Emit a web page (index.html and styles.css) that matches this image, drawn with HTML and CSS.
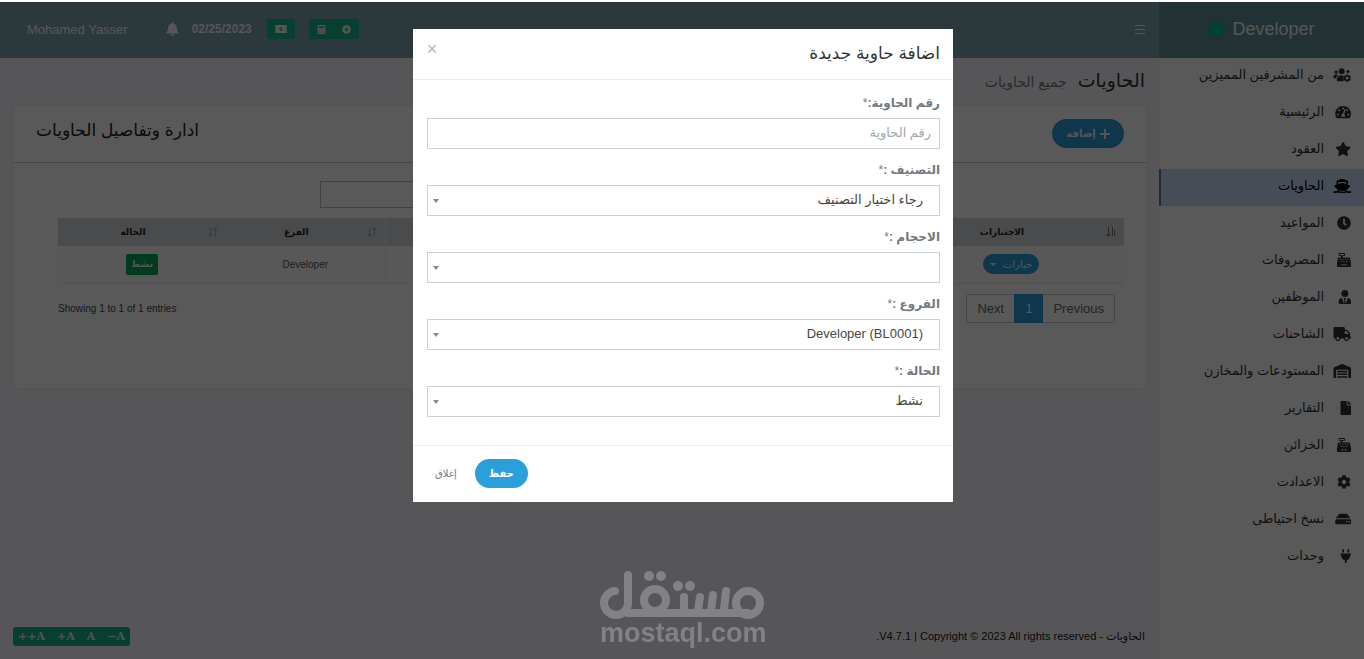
FILE: index.html
```html
<!DOCTYPE html>
<html lang="ar" dir="rtl">
<head>
<meta charset="utf-8">
<meta name="viewport" content="width=device-width, initial-scale=1">
<title>الحاويات</title>
<link rel="stylesheet" href="styles.css">
</head>
<body>
<div class="app">
  <aside class="sidebar">
    <a class="brand" href="#"><span class="brand-name" dir="ltr">Developer</span><span class="brand-dot"></span></a>
    <nav>
      <ul class="menu">
        <li><a href="#"><svg class="icon" preserveAspectRatio="xMaxYMid" viewBox="0 0 640 512"><circle cx="96" cy="150" r="62"/><circle cx="300" cy="120" r="108"/><circle cx="530" cy="130" r="56"/><path d="M0 330c0-60 30-96 80-96h50c20 0 36 8 48 20-50 28-76 70-84 120H0zM120 440c0-100 50-170 140-170h80c20 0 30 10 30 40v170H160c-25 0-40-15-40-40z"/><path fill-rule="evenodd" d="M466 230h64l8 40 30 17 38-13 32 54-30 27v34l30 27-32 54-38-13-30 17-8 38h-64l-8-38-30-17-38 13-32-54 30-27v-34l-30-27 32-54 38 13 30-17zM498 322a50 50 0 1 0 0 100 50 50 0 0 0 0-100z"/></svg><span>من المشرفين المميزين</span></a></li>
        <li><a href="#"><svg class="icon" preserveAspectRatio="xMaxYMid" viewBox="0 0 576 512"><path fill-rule="evenodd" d="M288 32C129 32 0 161 0 320c0 53 14 102 39 145 6 9 16 15 27 15h444c11 0 21-6 27-15 25-43 39-92 39-145C576 161 447 32 288 32zm0 62a34 34 0 1 1 0 68 34 34 0 0 1 0-68zM96 384a34 34 0 1 1 0-68 34 34 0 0 1 0 68zm48-160a34 34 0 1 1 0-68 34 34 0 0 1 0 68zm208 208H224c-10-50 10-95 57-110l61-184 40 13-61 185c36 20 50 56 31 96zm128-48a34 34 0 1 1 0-68 34 34 0 0 1 0 68zm-48-160a34 34 0 1 1 0-68 34 34 0 0 1 0 68z"/></svg><span>الرئيسية</span></a></li>
        <li><a href="#"><svg class="icon" preserveAspectRatio="xMaxYMid" viewBox="0 0 576 512"><path d="M259.3 17.8L194 150.2 47.9 171.5c-26.2 3.8-36.7 36.1-17.7 54.6l105.7 103-25 145.5c-4.5 26.3 23.2 46 46.4 33.7L288 439.6l130.7 68.7c23.2 12.2 50.9-7.4 46.4-33.7l-25-145.5 105.7-103c19-18.5 8.5-50.8-17.7-54.6L382 150.2 316.7 17.8c-11.7-23.6-45.6-23.9-57.4 0z"/></svg><span>العقود</span></a></li>
        <li class="active"><a href="#"><svg class="icon" preserveAspectRatio="xMaxYMid" viewBox="0 0 640 512"><path fill-rule="evenodd" d="M224 0h192v48h64c26 0 48 22 48 48v110l60 20c22 8 28 34 12 50l-92 96c-20 36-60 60-108 60H240c-48 0-88-24-108-60L40 276c-16-16-10-42 12-50l60-20V96c0-26 22-48 48-48h64zm-48 112v72l144-46 144 46v-72z"/><path d="M0 448h90c30 0 50-20 66-38 40 50 100 50 164 50s124 0 164-50c16 18 36 38 66 38h90v64h-90c-30 0-50-8-66-18-50 22-110 18-164 18s-114 4-164-18c-16 10-36 18-66 18H0z"/></svg><span>الحاويات</span></a></li>
        <li><a href="#"><svg class="icon" preserveAspectRatio="xMaxYMid" viewBox="0 0 512 512"><path d="M256 8C119 8 8 119 8 256s111 248 248 248 248-111 248-248S393 8 256 8zm92 313l-20 25a16 16 0 0 1-22 2l-67-49a40 40 0 0 1-15-31V112a16 16 0 0 1 16-16h32a16 16 0 0 1 16 16v144l58 42a16 16 0 0 1 2 23z"/></svg><span>المواعيد</span></a></li>
        <li><a href="#"><svg class="icon" preserveAspectRatio="xMaxYMid" viewBox="0 0 512 512"><path fill-rule="evenodd" d="M64 0h224v112h-80v48h240c16 0 28 12 32 28l32 196v96c0 18-14 32-32 32H32c-18 0-32-14-32-32v-96l32-196c4-16 16-28 32-28h80v-48H64zm32 32v48h160V32zM96 208v40h40v-40zm96 0v40h40v-40zm96 0v40h40v-40zm96 0v40h40v-40zM140 290v40h40v-40zm92 0v40h40v-40zm96 0v40h40v-40zM144 416v32h224v-32z"/></svg><span>المصروفات</span></a></li>
        <li><a href="#"><svg class="icon" preserveAspectRatio="xMaxYMid" viewBox="0 0 448 512"><circle cx="224" cy="128" r="128"/><path d="M120 290l70 210 22-120-30-60 20-30h44l20 30-30 60 22 120 70-210c70 6 120 56 120 130v44c0 26-22 48-48 48H48c-26 0-48-22-48-48v-44c0-74 50-124 120-130z"/></svg><span>الموظفين</span></a></li>
        <li><a href="#"><svg class="icon" preserveAspectRatio="xMaxYMid" viewBox="0 0 640 512"><path d="M624 352h-16V243.900c0-12.700-5.100-24.900-14.100-33.900L494 110.100c-9-9-21.200-14.100-33.900-14.100H416V48c0-26.500-21.500-48-48-48H48C21.500 0 0 21.500 0 48v320c0 26.500 21.500 48 48 48h16c0 53 43 96 96 96s96-43 96-96h128c0 53 43 96 96 96s96-43 96-96h48c8.800 0 16-7.200 16-16v-32c0-8.800-7.200-16-16-16zM160 464c-26.500 0-48-21.500-48-48s21.500-48 48-48 48 21.500 48 48-21.500 48-48 48zm320 0c-26.500 0-48-21.500-48-48s21.500-48 48-48 48 21.500 48 48-21.500 48-48 48zm80-208H416V144h44.100l99.900 99.900V256z"/></svg><span>الشاحنات</span></a></li>
        <li><a href="#"><svg class="icon" preserveAspectRatio="xMaxYMid" viewBox="0 0 640 512"><path d="M610 117L338 4c-12-5-25-5-37 0L30 117C12 125 0 142 0 162v334c0 9 7 16 16 16h80V240c0-18 15-32 33-32h382c18 0 33 14 33 32v272h80c9 0 16-7 16-16V162c0-20-12-37-30-45z"/><path d="M136 248h368v60H136zM136 346h368v60H136zM136 444h368v60H136z"/></svg><span>المستودعات والمخازن</span></a></li>
        <li><a href="#"><svg class="icon" preserveAspectRatio="xMaxYMid" viewBox="0 0 384 512"><path d="M224 136V0H24C11 0 0 11 0 24v464c0 13 11 24 24 24h336c13 0 24-11 24-24V160H248c-13 0-24-11-24-24zm160-14v6H256V0h6c6 0 12 3 17 7l98 98c4 5 7 11 7 17z"/></svg><span>التقارير</span></a></li>
        <li><a href="#"><svg class="icon" preserveAspectRatio="xMaxYMid" viewBox="0 0 512 512"><path fill-rule="evenodd" d="M64 0h224v112h-80v48h240c16 0 28 12 32 28l32 196v96c0 18-14 32-32 32H32c-18 0-32-14-32-32v-96l32-196c4-16 16-28 32-28h80v-48H64zm32 32v48h160V32zM96 208v40h40v-40zm96 0v40h40v-40zm96 0v40h40v-40zm96 0v40h40v-40zM140 290v40h40v-40zm92 0v40h40v-40zm96 0v40h40v-40zM144 416v32h224v-32z"/></svg><span>الخزائن</span></a></li>
        <li><a href="#"><svg class="icon" preserveAspectRatio="xMaxYMid" viewBox="0 0 512 512"><path d="M487.400 315.700l-42.600-24.600c4.300-23.200 4.300-47 0-70.200l42.600-24.600c4.900-2.800 7.100-8.600 5.500-14-11.100-35.600-30-67.800-54.700-94.600-3.800-4.100-10-5.100-14.800-2.300L380.800 110c-17.900-15.400-38.500-27.300-60.800-35.100V25.800c0-5.600-3.900-10.500-9.400-11.700-36.700-8.200-74.300-7.800-109.200 0-5.500 1.200-9.400 6.100-9.400 11.700V75c-22.200 7.900-42.800 19.800-60.800 35.100L88.700 85.500c-4.900-2.800-11-1.900-14.800 2.300-24.700 26.700-43.600 58.900-54.700 94.600-1.700 5.400.6 11.200 5.500 14L67.300 221c-4.300 23.200-4.300 47 0 70.200l-42.600 24.600c-4.900 2.800-7.100 8.600-5.500 14 11.100 35.600 30 67.800 54.700 94.600 3.800 4.100 10 5.100 14.800 2.300l42.600-24.600c17.900 15.400 38.500 27.300 60.800 35.100v49.200c0 5.600 3.900 10.500 9.400 11.700 36.700 8.200 74.300 7.800 109.200 0 5.500-1.200 9.400-6.100 9.400-11.700v-49.200c22.200-7.900 42.800-19.800 60.800-35.100l42.600 24.600c4.900 2.800 11 1.900 14.800-2.300 24.700-26.700 43.600-58.900 54.700-94.600 1.500-5.500-.7-11.300-5.600-14.100zM256 336c-44.100 0-80-35.900-80-80s35.900-80 80-80 80 35.900 80 80-35.900 80-80 80z"/></svg><span>الاعدادت</span></a></li>
        <li><a href="#"><svg class="icon" preserveAspectRatio="xMaxYMid" viewBox="0 0 576 512"><path fill-rule="evenodd" d="M48 264h480c26 0 48 22 48 48v88c0 26-22 48-48 48H48c-26 0-48-22-48-48v-88c0-26 22-48 48-48zm352 64v56h44v-56zm88 0v56h44v-56z"/><path d="M24 230L130 86c10-14 24-22 40-22h236c16 0 30 8 40 22l106 144z"/></svg><span>نسخ احتياطى</span></a></li>
        <li><a href="#"><svg class="icon" preserveAspectRatio="xMaxYMid" viewBox="0 0 384 512"><path d="M64 32a32 32 0 0 1 64 0v96H64zM256 32a32 32 0 0 1 64 0v96h-64zM16 160h352c9 0 16 7 16 16v32c0 9-7 16-16 16h-16v32c0 77-55 142-128 157v99h-64v-99C87 398 32 333 32 256v-32H16c-9 0-16-7-16-16v-32c0-9 7-16 16-16z"/></svg><span>وحدات</span></a></li>
      </ul>
    </nav>
  </aside>

  <div class="main">
    <header class="topbar">
      <button class="burger" type="button" aria-label="القائمة"><span></span><span></span><span></span></button>
      <div class="topbar-tools" dir="ltr">
        <a class="user" href="#">Mohamed Yasser</a>
        <svg class="bell" viewBox="0 0 448 512"><path d="M224 512c35 0 64-29 64-64H160c0 35 29 64 64 64zm215-150c-19-20-55-52-55-154 0-78-54-140-128-155V32a32 32 0 0 0-64 0v21C118 68 64 130 64 208c0 102-36 134-55 154-6 7-9 14-9 22 0 16 13 32 32 32h384c19 0 32-16 32-32 0-8-3-15-9-22z"/></svg>
        <strong class="date">02/25/2023</strong>
        <button class="tool" type="button" aria-label="النقدية"><svg viewBox="0 0 640 448"><path fill-rule="evenodd" d="M32 0h576c18 0 32 14 32 32v384c0 18-14 32-32 32H32c-18 0-32-14-32-32V32C0 14 14 0 32 0zm288 110c-50 0-86 50-86 114s36 114 86 114 86-50 86-114-36-114-86-114z"/><path d="M296 160h48v128h-48z"/></svg></button>
        <span class="tool-pair">
          <button class="tool" type="button" aria-label="الآلة الحاسبة"><svg class="calc" viewBox="0 0 448 512"><path fill-rule="evenodd" d="M48 0h352c26 0 48 22 48 48v416c0 26-22 48-48 48H48c-26 0-48-22-48-48V48C0 22 22 0 48 0zm16 64v110h320V64zM70 240v64h64v-64zm122 0v64h64v-64zm122 0v64h64v-64zM70 370v64h64v-64zm122 0v64h64v-64zm122 0v64h64v-64z"/></svg></button>
          <button class="tool" type="button" aria-label="إضافة"><svg class="plus" viewBox="0 0 512 512"><path fill-rule="evenodd" d="M256 8a248 248 0 1 0 0 496 248 248 0 0 0 0-496zm-34 116h68v98h98v68h-98v98h-68v-98h-98v-68h98z"/></svg></button>
        </span>
      </div>
    </header>

    <div class="page-head">
      <h1>الحاويات</h1>
      <small>جميع الحاويات</small>
    </div>

    <section class="card">
      <div class="card-head">
        <button class="btn btn-add" type="button"><svg viewBox="0 0 10 10"><path d="M4 0h2v4h4v2H6v4H4V6H0V4h4z"/></svg>إضافة</button>
        <h2>ادارة وتفاصيل الحاويات</h2>
      </div>
      <div class="card-body">
        <div class="search-row"><input class="search" type="search" aria-label="بحث"></div>
        <table class="grid">
          <colgroup><col class="c-opt"><col><col><col><col class="c-branch"><col class="c-state"></colgroup>
          <thead>
            <tr>
              <th><div class="th sorted"><span>الاختبارات</span><svg viewBox="0 0 10 10"><path d="M2 0h1v7h2L2.500 10 0 7h2zM6 0h1v9H6zM8 3h1v6H8z"/></svg></div></th>
              <th></th><th></th><th class="edge"></th>
              <th><div class="th"><span>الفرع</span><svg viewBox="0 0 10 10"><path d="M2 0h1v7h2L2.500 10 0 7h2zM7.500 0L10 3H8v7H7V3H5z"/></svg></div></th>
              <th><div class="th"><span>الحاله</span><svg viewBox="0 0 10 10"><path d="M2 0h1v7h2L2.500 10 0 7h2zM7.500 0L10 3H8v7H7V3H5z"/></svg></div></th>
            </tr>
          </thead>
          <tbody>
            <tr>
              <td><button class="btn btn-options" type="button">خيارات<i class="caret"></i></button></td>
              <td></td><td></td><td class="edge"></td>
              <td>Developer</td>
              <td><span class="badge">نشط</span></td>
            </tr>
          </tbody>
        </table>
        <div class="table-foot">
          <div class="pager">
            <a href="#">Previous</a><a class="current" href="#">1</a><a href="#">Next</a>
          </div>
          <div class="info" dir="ltr">Showing 1 to 1 of 1 entries</div>
        </div>
      </div>
    </section>

    <footer class="foot">
      <div>الحاويات - <span dir="ltr">V4.7.1 | Copyright © 2023 All rights reserved</span>.</div>
      <div class="sizer" dir="ltr">
        <button type="button">++A</button><button type="button">+A</button><button type="button">A</button><button type="button">−A</button>
      </div>
    </footer>
  </div>
</div>

<div class="overlay">
  <form class="modal" role="dialog" aria-labelledby="dlg-title">
    <div class="modal-head">
      <h3 id="dlg-title">اضافة حاوية جديدة</h3>
      <button class="close" type="button" aria-label="إغلاق">×</button>
    </div>
    <div class="modal-body">
      <div class="field"><label for="num"><b>رقم الحاوية:</b>*</label><div class="control"><input id="num" type="text" placeholder="رقم الحاوية"></div></div>
      <div class="field"><label for="cat"><b>التصنيف :</b>*</label><div class="control pick"><select id="cat"><option>رجاء اختيار التصنيف</option></select></div></div>
      <div class="field"><label for="size"><b>الاحجام :</b>*</label><div class="control pick"><select id="size"><option></option></select></div></div>
      <div class="field"><label for="branch"><b>الفروع :</b>*</label><div class="control pick"><select id="branch"><option>&#x202A;Developer (BL0001)&#x202C;</option></select></div></div>
      <div class="field"><label for="state"><b>الحالة :</b>*</label><div class="control pick"><select id="state"><option>نشط</option></select></div></div>
    </div>
    <div class="modal-foot">
      <button class="btn btn-save" type="submit">حفظ</button>
      <button class="btn-link" type="button">إغلاق</button>
    </div>
  </form>
</div>

<div class="watermark" dir="ltr">
  <svg viewBox="0 0 164 50" role="img" aria-label="مستقل">
    <g fill="none" stroke="currentColor" stroke-width="8">
      <circle cx="148" cy="32" r="12"/>
      <circle cx="55" cy="29" r="11"/>
      <path stroke-linecap="round" d="M28 4v28a12 12 0 1 1-13-12M28 42H148M84 38v-12M98 40l2-14M111 40l2-16M124 38l2-18"/>
    </g>
    <g fill="currentColor"><circle cx="49" cy="5" r="5"/><circle cx="61" cy="5" r="5"/><circle cx="78" cy="15" r="5"/><circle cx="90" cy="15" r="5"/></g>
  </svg>
  <span>mostaql.com</span>
</div>
</body>
</html>
```
FILE: styles.css
```css
* { box-sizing: border-box; }

html { background: #fff; }

body {
  margin: 0;
  padding-top: 2px;
  font-family: "Liberation Sans", "DejaVu Sans", sans-serif;
  font-size: 12px;
  color: #333;
}

h1, h2, h3 { margin: 0; font-weight: 400; }
a { color: inherit; text-decoration: none; }
button { border: 0; padding: 0; background: none; font: inherit; color: inherit; }

.app {
  display: flex;
  min-height: calc(100vh - 2px);
  background: #f7f7fc;
}

/* sidebar */
.sidebar { flex: 0 0 205px; background: #fff; }

.brand {
  display: flex;
  align-items: center;
  justify-content: center;
  gap: 7px;
  height: 56px;
  padding-bottom: 2px;
  color: #f2f6f6;
  font-size: 18px;
  background: #618f95;
}
.brand-dot { width: 17px; height: 17px; border-radius: 50%; background: #14b48c; }

.menu { margin: 0; padding: 0; list-style: none; }
.menu a {
  display: flex;
  align-items: center;
  gap: 9px;
  height: 37px;
  padding: 0 13px 4px 0;
  font-size: 13px;
  line-height: 20px;
}
.menu .active a { background: #ccdcf5; border-left: 2px solid #5b7f94; color: #000; }
.icon { flex: 0 0 18px; width: 18px; height: 14px; fill: #333; }
.active .icon { fill: #000; }

/* top bar */
.main { flex: 1; min-width: 0; display: flex; flex-direction: column; }
.topbar {
  display: flex;
  justify-content: space-between;
  align-items: center;
  height: 56px;
  padding: 0 12px 2px 27px;
  color: #f2f6f6;
  background: #7ba3ab;
}
.burger { display: grid; gap: 3px; width: 14px; padding: 2px; }
.burger span { height: 1px; background: #f2f6f6; }
.topbar-tools { display: flex; align-items: center; }
.user { font-size: 13px; margin-right: 38px; }
.bell { width: 13px; height: 14px; margin-right: 13px; fill: #f2f6f6; }
.date { font-size: 12px; margin-right: 15px; }
.tool { display: flex; align-items: center; justify-content: center; width: 28px; height: 20px; background: #14b48c; border-radius: 1px; }
.tool svg { width: 12px; height: 8px; fill: #f2f6f6; }
.tool .calc, .tool .plus { width: 9px; height: 9px; }
.tool-pair { display: flex; margin-left: 14px; }
.tool-pair .tool { width: 25px; }

/* page heading */
.page-head { display: flex; align-items: baseline; gap: 11px; height: 48px; padding: 11px 14px 0 0; }
.page-head h1 { font-size: 19px; line-height: 24px; }
.page-head small { font-size: 14px; color: #777; }

/* card */
.card { margin: 0 13px 0 14px; background: #fff; border-radius: 4px; box-shadow: 0 0 6px #dfe6f2; }
.card-head {
  display: flex;
  justify-content: space-between;
  align-items: flex-start;
  height: 57px;
  padding: 13px 22px 0;
  border-bottom: 1px solid #c4cad0;
}
.card-head h2 { font-size: 17px; line-height: 24px; color: #222; }
.btn { border-radius: 15px; background: #2b9fd9; color: #fff; }
.btn-add { display: flex; align-items: center; justify-content: center; gap: 4px; width: 72px; height: 29px; font-size: 10px; font-weight: 700; color: #eef; }
.btn-add svg { width: 10px; height: 10px; fill: #eef; }
.card-body { padding: 18px 22px 65px 44px; }
.search-row { display: flex; justify-content: flex-end; padding-left: 262px; }
.search { width: 200px; height: 27px; border: 1px solid #b8bcc0; background: #fff; }

.grid { width: 100%; margin-top: 10px; border-collapse: collapse; table-layout: fixed; font-size: 10px; text-align: center; }
.c-opt { width: 226px; }
.c-branch { width: 159px; }
.c-state { width: 168px; }
.grid th { height: 28px; padding: 0 8px 0 0; background: #d4d7db; color: #222; font-size: 9px; }
.th { display: flex; align-items: center; flex-direction: row-reverse; }
.th span { flex: 1; }
.th svg { width: 10px; height: 10px; fill: #a8adb3; }
.th.sorted svg { fill: #777; }
.grid td { height: 37px; padding: 0; background: #fcfcfc; border-bottom: 1px solid #eaeaea; color: #556; }
.grid .edge { border-left: 1px solid #eee; }
.btn-options { display: inline-flex; align-items: center; justify-content: center; gap: 7px; width: 56px; height: 20px; font-size: 10px; color: #eef; }
.caret { border: 3px solid transparent; border-top-color: #eef; border-bottom: 0; }
.badge { display: inline-block; padding: 0 5px; border-radius: 2px; background: #00a65a; color: #eef; font-size: 9px; font-weight: 700; line-height: 21px; }

.table-foot { display: flex; justify-content: space-between; padding: 10px 9px 0 0; }
.pager { display: flex; border: 1px solid #ccc; border-radius: 3px; font-size: 13px; line-height: 27px; color: #666; }
.pager a { padding: 0 10px; }
.pager .current { margin: -1px 0; padding: 1px 11px; background: #2b9fd9; color: #eef; }
.info { font-size: 10px; line-height: 29px; color: #444; }

/* footer */
.foot { display: flex; justify-content: space-between; align-items: center; margin-top: auto; padding: 0 14px 13px 13px; font-size: 11px; line-height: 19px; color: #222; }
.sizer { display: flex; gap: 12px; padding: 0 5px; border-radius: 3px; background: #14b48c; color: #e4ece8; font-family: "DejaVu Serif", serif; font-size: 11px; font-weight: 700; }

/* dialog */
.overlay {
  position: fixed;
  inset: 2px 0 0;
  display: flex;
  justify-content: center;
  align-items: flex-start;
  padding: 27px 0 0 2px;
  background: rgba(0, 0, 0, .65);
}
.modal { width: 540px; background: #fff; color: #73797e; }
.modal-head {
  display: flex;
  justify-content: space-between;
  align-items: flex-start;
  height: 51px;
  padding: 13px;
  border-bottom: 1px solid #eee;
}
.modal-head h3 { font-size: 17px; line-height: 24px; color: #333; }
.close { width: 12px; font-size: 18px; line-height: 15px; color: #b5b5b5; }
.modal-body { padding: 11px 13px 28px 14px; display: grid; gap: 9px; }
.field label { display: block; margin-bottom: 3px; font-size: 12px; line-height: 24px; }
.control { position: relative; height: 31px; border: 1px solid #cdd0d2; }
.control input, .control select {
  display: block;
  width: 100%;
  height: 100%;
  padding: 0 8px 3px;
  border: 0;
  background: none;
  appearance: none;
  font: inherit;
  font-size: 13px;
  color: #444;
}
.control select { padding: 0 16px 3px; }
.control input::placeholder { color: #a3a7ab; }
.pick::after {
  content: "";
  position: absolute;
  left: 5px;
  top: 13px;
  border: 3px solid transparent;
  border-top: 4px solid #888;
  border-bottom: 0;
  pointer-events: none;
}
.modal-foot { display: flex; justify-content: flex-end; align-items: center; gap: 18px; height: 57px; padding: 0 22px 2px; border-top: 1px solid #eee; }
.btn-save { width: 53px; height: 29px; font-size: 10px; font-weight: 700; }
.btn-link { font-size: 10px; }

/* watermark */
.watermark {
  position: fixed;
  left: calc(50% - 82px);
  bottom: 14px;
  width: 164px;
  color: #828284;
  text-align: center;
  font-size: 27px;
  font-weight: 700;
  line-height: 24px;
}
.watermark svg { display: block; width: 164px; height: 50px; }
```
